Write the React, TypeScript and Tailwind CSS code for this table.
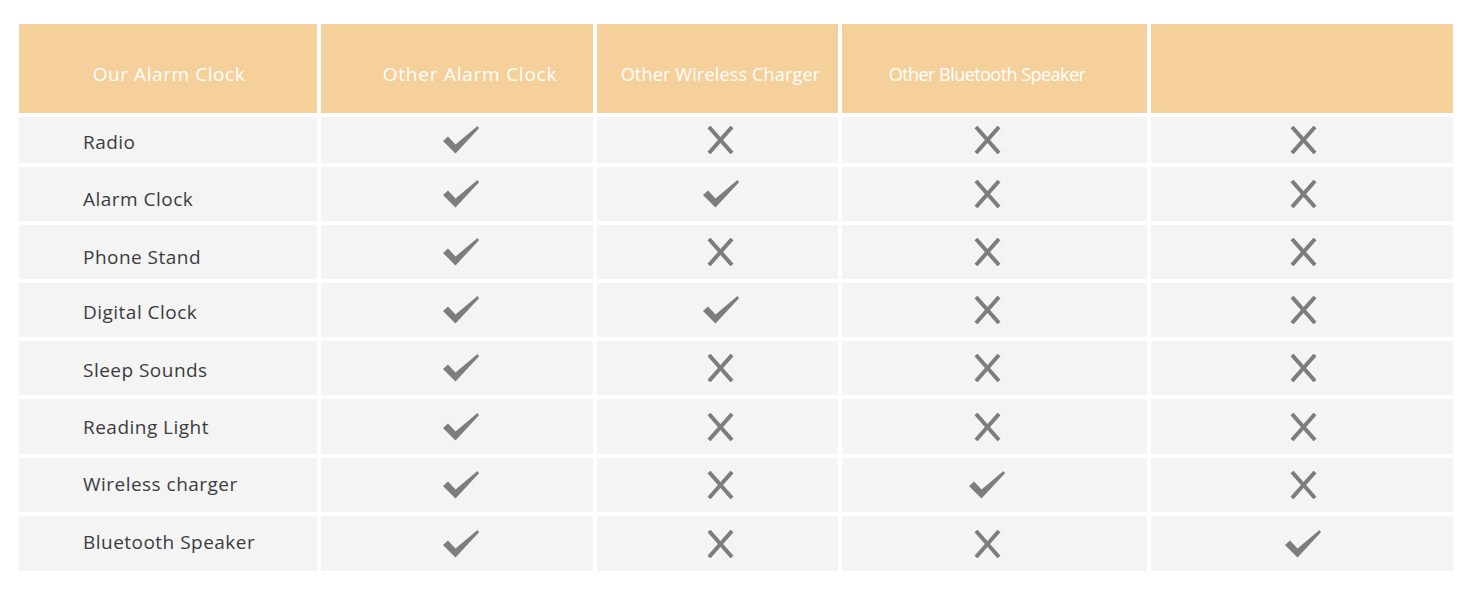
import React from "react";

const Check = () => (
  <svg width="36" height="28" viewBox="0 0 36 28" className="block">
    <polygon points="0,15 5,10.5 12.5,18.5 34.5,0 36,2.2 12.5,27.5" fill="#7d7d7d" />
  </svg>
);

const Cross = () => (
  <svg width="27" height="28" viewBox="0 0 27 28" className="block">
    <path d="M2 1 L25 27 M25 1 L2 27" stroke="#7d7d7d" strokeWidth="4" fill="none" />
  </svg>
);

type Row = { label: string; vals: boolean[]; h: string; t: string };

const rows: Row[] = [
  { label: "Radio", vals: [true, false, false, false], h: "h-[46px]", t: "pt-[4px]" },
  { label: "Alarm Clock", vals: [true, true, false, false], h: "h-[54px]", t: "pt-[10px]" },
  { label: "Phone Stand", vals: [true, false, false, false], h: "h-[54px]", t: "pt-[10px]" },
  { label: "Digital Clock", vals: [true, true, false, false], h: "h-[54px]", t: "pt-[5px]" },
  { label: "Sleep Sounds", vals: [true, false, false, false], h: "h-[54px]", t: "pt-[5px]" },
  { label: "Reading Light", vals: [true, false, false, false], h: "h-[55px]", t: "pt-[2px]" },
  { label: "Wireless charger", vals: [true, false, true, false], h: "h-[54px]", t: "pb-[2px]" },
  { label: "Bluetooth Speaker", vals: [true, false, false, true], h: "h-[55px]", t: "pb-[3px]" },
];

const iconPad = ["pl-[8px]", "pl-[6px]", "pr-[15px]", "pl-[2px]"];

export default function App() {
  return (
    <div className="w-[1464px] h-[600px] bg-white pl-[19px] pt-[24px]" style={{ fontFamily: '"Open Sans", sans-serif' }}>
      <div className="grid grid-cols-[298px_272px_241px_305px_302px] gap-[4px]">
        <div className="h-[89px] bg-[#f6d09a] flex items-center justify-center text-white text-[19px] tracking-[0.03em] pl-[2px] pt-[12px]">Our Alarm Clock</div>
        <div className="h-[89px] bg-[#f6d09a] flex items-center justify-center text-white text-[19px] tracking-[0.04em] pl-[26px] pt-[12px]">Other Alarm Clock</div>
        <div className="h-[89px] bg-[#f6d09a] flex items-center justify-center text-white text-[18px] tracking-[0.01em] pl-[6px] pt-[12px]">Other Wireless Charger</div>
        <div className="h-[89px] bg-[#f6d09a] flex items-center justify-center text-white text-[18px] tracking-[-0.03em] pr-[15px] pt-[12px]">Other Bluetooth Speaker</div>
        <div className="h-[89px] bg-[#f6d09a]" />
        {rows.map((r) => (
          <React.Fragment key={r.label}>
            <div className={`${r.h} ${r.t} bg-[#f4f4f4] flex items-center pl-[64px] text-[19px] tracking-[0.025em] leading-none text-[#3c3c3c]`}>
              {r.label}
            </div>
            {r.vals.map((v, i) => (
              <div key={i} className={`${r.h} bg-[#f4f4f4] flex items-center justify-center ${iconPad[i]}`}>
                {v ? <Check /> : <Cross />}
              </div>
            ))}
          </React.Fragment>
        ))}
      </div>
    </div>
  );
}
